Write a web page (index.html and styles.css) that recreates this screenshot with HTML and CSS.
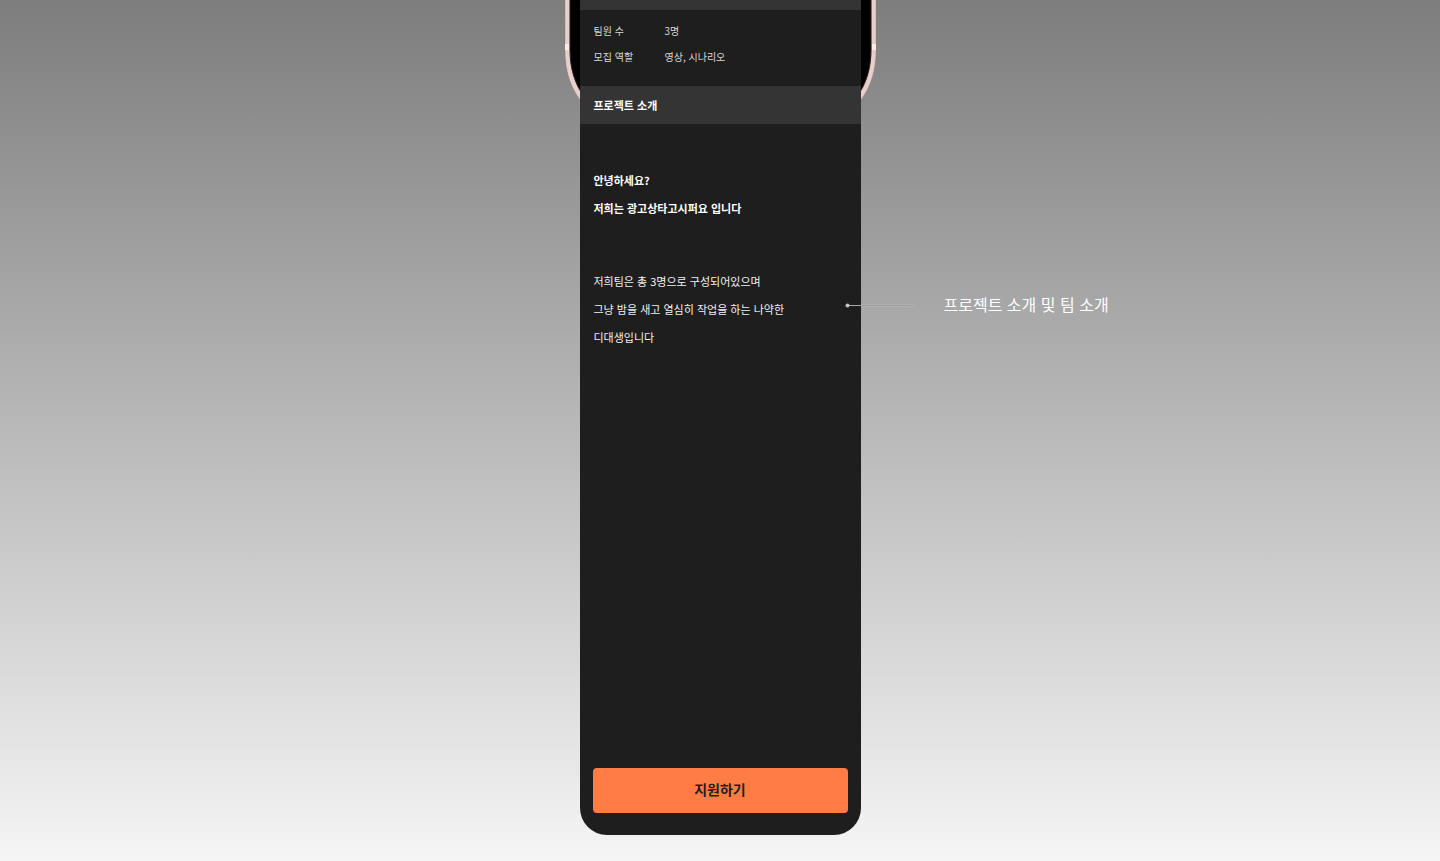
FILE: index.html
```html
<!DOCTYPE html>
<html lang="ko">
<head>
<meta charset="utf-8">
<meta name="viewport" content="width=device-width, initial-scale=1">
<title>프로젝트 소개</title>
<link rel="stylesheet" href="styles.css">
</head>
<body>
<main class="showcase">
  <article class="device">
    <svg class="device-frame" viewBox="0 0 312 124" aria-hidden="true">
      <path d="M2.500 -5V50C2.500 87 23 119 58 119H253C288 119 308.500 87 308.500 50V-5Z" fill="#000" stroke="#c9aeac" stroke-width="5"/>
      <path d="M2.500 -5V50C2.500 87 23 119 58 119H253C288 119 308.500 87 308.500 50V-5" fill="none" stroke="#e8cfcd" stroke-width="4"/>
      <path d="M5 -5V50C5 85 24 115 58 115H253C287 115 306 85 306 50V-5" fill="none" stroke="#2a2020" stroke-width="1"/>
      <path d="M0 44H4V50H0ZM307 44H311V50H307Z" fill="#f7eae9"/>
    </svg>
    <div class="screen">
      <div class="strip"></div>
      <dl class="facts">
        <dt>팀원 수</dt><dd>3명</dd>
        <dt>모집 역할</dt><dd>영상, 시나리오</dd>
      </dl>
      <h2 class="section-title">프로젝트 소개</h2>
      <section class="intro">
        <p class="greeting">안녕하세요?<br>저희는 광고상타고시퍼요 입니다</p>
        <p class="body-text">저희팀은 총 3명으로 구성되어있으며<br>그냥 밤을 새고 열심히 작업을 하는 나약한<br>디대생입니다</p>
      </section>
      <button class="apply" type="button">지원하기</button>
    </div>
    <aside class="callout">
      <svg class="leader" width="72" height="8" viewBox="0 0 72 8" aria-hidden="true">
        <path d="M2 5.500H16" stroke="#a8a8a8" stroke-width="1"/>
        <path d="M16 4.500H67M16 6.500H67" stroke="#b0b0b0" stroke-width="1"/>
        <path d="M16 5.500H67" stroke="#9e9e9e" stroke-width="1"/>
        <circle cx="2.500" cy="5.500" r="2" fill="#c4c4c4"/>
        <circle cx="68" cy="5.500" r="1.500" fill="#a7a7a7" stroke="#b0b0b0" stroke-width="1"/>
      </svg>
      <span>프로젝트 소개 및 팀 소개</span>
    </aside>
  </article>
</main>
</body>
</html>
```
FILE: styles.css
```css
* {
  box-sizing: border-box;
}

body {
  margin: 0;
  font-family: "Noto Sans CJK KR", sans-serif;
  color: #f1f1f1;
}

.showcase {
  display: flex;
  justify-content: center;
  align-items: flex-start;
  min-height: 100vh;
  padding-bottom: 26px;
  overflow: hidden;
  background: linear-gradient(#7d7d7d, #f5f5f5);
}

.device {
  position: relative;
  width: 281px;
}

.device-frame {
  position: absolute;
  top: 0;
  left: -15px;
  width: 312px;
  height: 124px;
}

.screen {
  position: relative;
  display: flex;
  flex-direction: column;
  min-height: 835px;
  padding-bottom: 22px;
  overflow: hidden;
  border-radius: 0 0 27px 27px;
  background: #1e1e1e;
}

.strip {
  height: 10px;
  background: #343434;
}

.facts {
  display: grid;
  grid-template-columns: 71px 1fr;
  row-gap: 10px;
  margin: 0;
  padding: 13px 14px 21px;
  font-size: 10px;
  line-height: 16px;
  color: #d8d8d8;
}

.facts dd {
  margin: 0;
}

.section-title {
  margin: 0;
  padding: 0 14px;
  font-size: 11px;
  line-height: 38px;
  font-weight: 700;
  color: #fff;
  background: #343434;
}

.intro {
  display: flex;
  flex-direction: column;
  gap: 45px;
  padding: 42px 14px;
  line-height: 28px;
}

.intro p {
  margin: 0;
}

.greeting {
  font-size: 11px;
  font-weight: 700;
  color: #fff;
}

.body-text {
  font-size: 11px;
  white-space: nowrap;
}

.apply {
  height: 45px;
  margin: auto 13px 0;
  padding: 0 0 3px;
  border: 0;
  border-radius: 4px;
  background: #ff7d45;
  color: #1e1e1e;
  font-family: inherit;
  font-size: 14px;
  font-weight: 700;
  cursor: pointer;
}

.callout {
  position: absolute;
  top: 292px;
  left: 265px;
  display: flex;
  align-items: center;
  gap: 27px;
  font-size: 16px;
  line-height: 24px;
  font-weight: 400;
  color: #fff;
  white-space: nowrap;
}
```
